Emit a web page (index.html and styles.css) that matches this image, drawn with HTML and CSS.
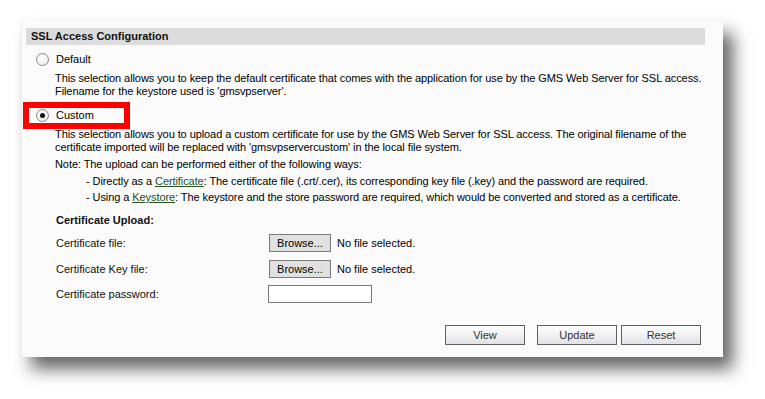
FILE: index.html
```html
<!DOCTYPE html>
<html>
<head>
  <meta charset="UTF-8">
  <title>SSL Access Configuration</title>
  <link rel="stylesheet" href="styles.css">
</head>
<body>
  <div class="panel">
    <div class="section-title">SSL Access Configuration</div>

    <label class="radio-row">
      <span class="radio"></span>
      <span>Default</span>
    </label>
    <div class="desc">
      This selection allows you to keep the default certificate that comes with the application for use by the GMS Web Server for SSL access.<br>
      Filename for the keystore used is 'gmsvpserver'.
    </div>

    <label class="radio-row custom-row">
      <span class="radio checked"></span>
      <span>Custom</span>
      <span class="highlight"></span>
    </label>
    <div class="desc desc-custom">
      This selection allows you to upload a custom certificate for use by the GMS Web Server for SSL access. The original filename of the<br>
      certificate imported will be replaced with 'gmsvpservercustom' in the local file system.
    </div>
    <div class="note">Note: The upload can be performed either of the following ways:</div>
    <ul class="ways">
      <li>- Directly as a <a href="#">Certificate</a>: The certificate file (.crt/.cer), its corresponding key file (.key) and the password are required.</li>
      <li>- Using a <a href="#">Keystore</a>: The keystore and the store password are required, which would be converted and stored as a certificate.</li>
    </ul>

    <div class="upload-title">Certificate Upload:</div>
    <div class="field">
      <span class="field-label">Certificate file:</span>
      <span class="browse">Browse...</span>
      <span class="file-name">No file selected.</span>
    </div>
    <div class="field">
      <span class="field-label">Certificate Key file:</span>
      <span class="browse">Browse...</span>
      <span class="file-name">No file selected.</span>
    </div>
    <div class="field field-pass">
      <span class="field-label">Certificate password:</span>
      <input type="password" class="pass-input">
    </div>

    <div class="actions">
      <button class="btn btn-view">View</button>
      <button class="btn">Update</button>
      <button class="btn">Reset</button>
    </div>
  </div>
</body>
</html>
```

FILE: styles.css
```css
html, body {
  min-height: 399px;
}
body {
  margin: 0;
  padding: 21px 0 42px 21px;
  box-sizing: border-box;
  background: #fff;
  font-family: 'Liberation Sans', Arial, sans-serif;
  font-size: 11px;
  color: #000;
}
.panel {
  width: 702px;
  height: 336px;
  box-sizing: border-box;
  padding: 7px 18px 0 4px;
  background: #fbfbfb;
  border-left: 1px solid #ececec;
  box-shadow: 10px 12px 16px rgba(0, 0, 0, 0.6);
}
.section-title {
  height: 17px;
  line-height: 17px;
  padding-left: 5px;
  background: #dcdcdc;
  font-weight: bold;
  color: #111;
}
.radio-row {
  display: flex;
  align-items: center;
  height: 16px;
  margin-top: 6px;
  padding-left: 10px;
  position: relative;
}
.radio {
  width: 11px;
  height: 11px;
  border: 1px solid #8a8a8a;
  border-radius: 50%;
  background: radial-gradient(circle at 40% 35%, #fff 0%, #f0f0f0 70%, #dcdcdc 100%);
  margin-right: 7px;
  position: relative;
}
.radio.checked::after {
  content: "";
  position: absolute;
  left: 3px;
  top: 3px;
  width: 5px;
  height: 5px;
  border-radius: 50%;
  background: #111;
}
.custom-row {
  margin-top: 9px;
}
.highlight {
  position: absolute;
  left: -3px;
  top: -5px;
  width: 95px;
  height: 15px;
  border: 6px solid #f00;
}
.desc {
  margin: 5px 0 0 29px;
  line-height: 13px;
  letter-spacing: -0.08px;
}
.note {
  margin: 4px 0 0 29px;
  line-height: 13px;
  letter-spacing: -0.08px;
}
.ways {
  list-style: none;
  margin: 2px 0 0 60px;
  padding: 0;
  line-height: 16px;
  letter-spacing: -0.08px;
}
.ways a {
  color: #245224;
}
.upload-title {
  margin: 8px 0 0 30px;
  line-height: 14px;
  font-weight: bold;
  color: #111;
}
.field {
  display: flex;
  align-items: center;
  height: 18px;
  margin: 7px 0 0 30px;
}
.field + .field {
  margin-top: 8px;
}
.field-pass {
  margin-top: 7px !important;
}
.field-label {
  width: 213px;
  color: #111;
}
.browse {
  width: 60px;
  height: 16px;
  line-height: 16px;
  text-align: center;
  border: 1px solid #7a7a7a;
  background: #e1e1e1;
  color: #000;
}
.file-name {
  margin-left: 6px;
}
.pass-input {
  margin-left: -1px;
  width: 104px;
  height: 18px;
  box-sizing: border-box;
  border: 1px solid #7a7a7a;
  background: #fff;
  padding: 0;
}
.actions {
  display: flex;
  justify-content: flex-end;
  gap: 4px;
  margin: 22px 4px 0 0;
}
.btn {
  width: 80px;
  height: 20px;
  box-sizing: border-box;
  border: 1px solid #5f5f66;
  background: linear-gradient(#fdfdfd, #f1f1f3 50%, #e2e2e6);
  font-family: 'Liberation Sans', Arial, sans-serif;
  font-size: 11px;
  color: #333;
  padding: 0;
}
.btn-view {
  margin-right: 8px;
}
```
